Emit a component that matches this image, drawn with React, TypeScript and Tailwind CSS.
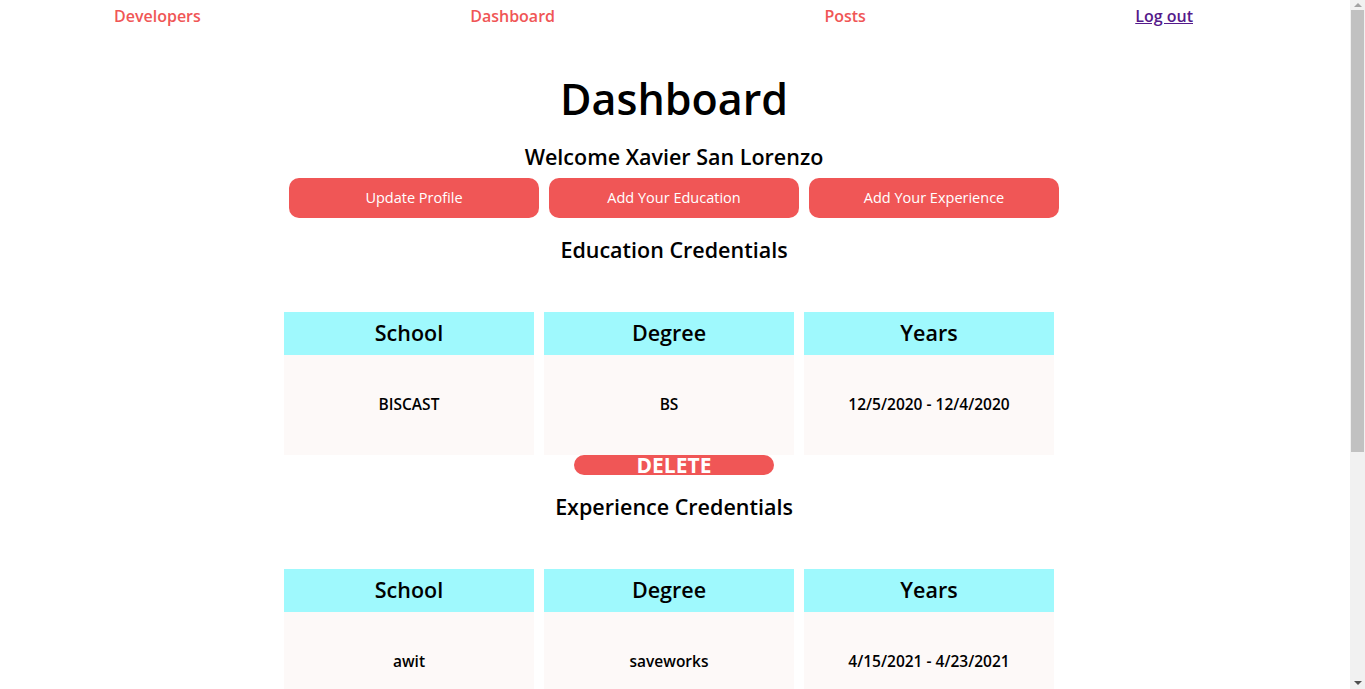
import React from 'react';

const font = { fontFamily: '"Open Sans", "Noto Sans", sans-serif' };

type Row = { school: string; degree: string; years: string };

const education: Row[] = [{ school: 'BISCAST', degree: 'BS', years: '12/5/2020 - 12/4/2020' }];
const experience: Row[] = [{ school: 'awit', degree: 'saveworks', years: '4/15/2021 - 4/23/2021' }];

function CredentialTable({ rows }: { rows: Row[] }) {
  return (
    <div className="flex flex-col items-center">
      <div className="flex">
        {['School', 'Degree', 'Years'].map((h) => (
          <div key={h} className="w-[250px] mr-[10px] h-[43px] bg-[#9ff9fd] flex items-center justify-center text-[21.5px] font-semibold text-black">
            {h}
          </div>
        ))}
      </div>
      {rows.map((r, i) => (
        <div key={i} className="flex flex-col items-center">
          <div className="flex">
            {[r.school, r.degree, r.years].map((v, j) => (
              <div key={j} className="w-[250px] mr-[10px] h-[100px] bg-[#fdf9f8] flex items-center justify-center text-[15.5px] font-semibold text-black">
                {v}
              </div>
            ))}
          </div>
          <button className="w-[200px] h-[20px] rounded-full bg-[#f05656] text-white text-[21px] font-bold leading-none flex items-center justify-center">
            DELETE
          </button>
        </div>
      ))}
    </div>
  );
}

function Scrollbar() {
  return (
    <div className="w-[15px] h-full bg-[#f1f1f1] flex flex-col items-center shrink-0">
      <div className="h-[10px] flex items-center justify-center">
        <div className="w-0 h-0 border-l-[4px] border-r-[4px] border-b-[4px] border-l-transparent border-r-transparent border-b-[#a3a3a3]" />
      </div>
      <div className="w-[13px] h-[442px] bg-[#c1c1c1]" />
      <div className="flex-1" />
      <div className="h-[12px] flex items-center justify-center">
        <div className="w-0 h-0 border-l-[4px] border-r-[4px] border-t-[4px] border-l-transparent border-r-transparent border-t-[#505050]" />
      </div>
    </div>
  );
}

export default function App() {
  return (
    <div style={font} className="bg-white h-[689px] flex overflow-hidden text-black">
      <div className="w-[1348px] mr-[2px] shrink-0 h-full overflow-hidden">
        <nav className="flex justify-between items-center pl-[114px] pr-[155px] h-[31px] text-[16px] font-semibold">
          <a className="text-[#f05656]">Developers</a>
          <a className="text-[#f05656]">Dashboard</a>
          <a className="text-[#f05656]">Posts</a>
          <a href="#" className="text-[#551a8b] underline">Log out</a>
        </nav>

        <div className="flex flex-col items-center">
          <h1 className="text-[43px] font-semibold leading-none mt-[46px]">Dashboard</h1>
          <h2 className="text-[21.5px] font-semibold mt-[26px] leading-none">Welcome Xavier San Lorenzo</h2>
          <div className="flex gap-[10px] mt-[10px]">
            {['Update Profile', 'Add Your Education', 'Add Your Experience'].map((b) => (
              <button key={b} className="w-[250px] h-[40px] rounded-[10px] bg-[#f05656] text-white text-[14.5px]">
                {b}
              </button>
            ))}
          </div>
          <h2 className="text-[21.5px] font-semibold mt-[21px] leading-none">Education Credentials</h2>
          <div className="mt-[52px]">
            <CredentialTable rows={education} />
          </div>
          <h2 className="text-[21.5px] font-semibold mt-[21px] leading-none">Experience Credentials</h2>
          <div className="mt-[51px]">
            <CredentialTable rows={experience} />
          </div>
          <div className="h-[280px]" />
        </div>
      </div>
      <Scrollbar />
    </div>
  );
}
